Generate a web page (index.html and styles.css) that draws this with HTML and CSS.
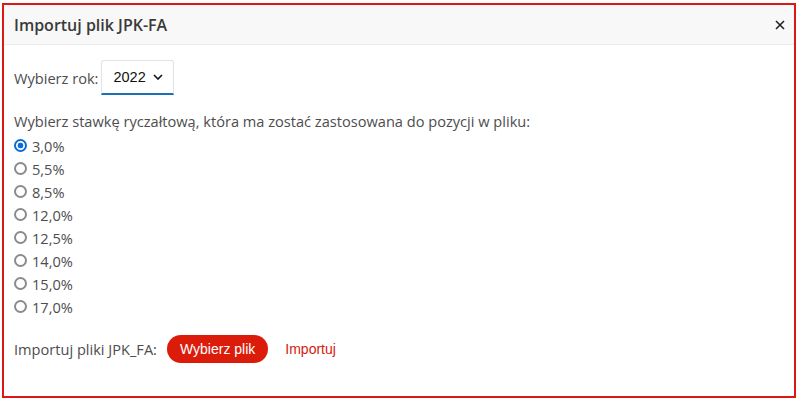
FILE: index.html
```html
<!DOCTYPE html>
<html lang="pl">
<head>
<meta charset="utf-8">
<title>Importuj plik JPK-FA</title>
<link rel="stylesheet" href="styles.css">
</head>
<body>
<div class="dialog">
  <div class="dialog-header">
    <h1 class="dialog-title">Importuj plik JPK-FA</h1>
    <button class="close" aria-label="Zamknij">
      <svg width="10" height="10" viewBox="0 0 10 10"><path d="M1 1L9 9M9 1L1 9" stroke="#222" stroke-width="1.6"/></svg>
    </button>
  </div>
  <div class="dialog-body">
    <div class="year-row">
      <span class="label">Wybierz rok:</span>
      <div class="select">
        <span class="select-value">2022</span>
        <svg width="10" height="6" viewBox="0 0 10 6"><path d="M1 1L5 5L9 1" fill="none" stroke="#111" stroke-width="1.6"/></svg>
      </div>
    </div>
    <p class="rates-label">Wybierz stawkę ryczałtową, która ma zostać zastosowana do pozycji w pliku:</p>
    <div class="rates">
      <label class="radio checked"><span class="dot"></span>3,0%</label>
      <label class="radio"><span class="dot"></span>5,5%</label>
      <label class="radio"><span class="dot"></span>8,5%</label>
      <label class="radio"><span class="dot"></span>12,0%</label>
      <label class="radio"><span class="dot"></span>12,5%</label>
      <label class="radio"><span class="dot"></span>14,0%</label>
      <label class="radio"><span class="dot"></span>15,0%</label>
      <label class="radio"><span class="dot"></span>17,0%</label>
    </div>
    <div class="import-row">
      <span class="label">Importuj pliki JPK_FA:</span>
      <button class="btn-file">Wybierz plik</button>
      <a class="link-import">Importuj</a>
    </div>
  </div>
</div>
</body>
</html>
```

FILE: styles.css
```css
* { box-sizing: border-box; }
html, body { margin: 0; background: #fff; }
body {
  padding: 3px 3px 4px 2px;
  height: 402px;
  font-family: "Open Sans", sans-serif;
  color: #4d4d4d;
}
.dialog {
  border: 2px solid #dd1616;
  height: 100%;
  display: flex;
  flex-direction: column;
}
.dialog-header {
  height: 40px;
  background: #f8f8f8;
  border-bottom: 1px solid #ececec;
  display: flex;
  align-items: center;
  justify-content: space-between;
  padding: 0 8px 0 10px;
}
.dialog-title {
  margin: 0;
  font-family: "Open Sans", sans-serif;
  font-weight: 600;
  font-size: 16px;
  color: #3a3a3a;
}
.close {
  border: 0;
  background: none;
  padding: 0;
  width: 12px;
  height: 12px;
  display: flex;
  align-items: center;
  justify-content: center;
}
.dialog-body {
  padding: 15px 10px 0 10px;
  font-size: 14.6px;
}
.year-row {
  display: flex;
  align-items: center;
  gap: 3px;
}
.select {
  width: 73px;
  height: 35px;
  border: 1px solid #e2e2e2;
  border-bottom: 2px solid #1a6fb5;
  border-radius: 3px 3px 0 0;
  display: flex;
  align-items: center;
  justify-content: space-between;
  padding: 0 10px 0 11px;
  font-family: "Liberation Sans", Arial, sans-serif;
  font-size: 14.5px;
  color: #111;
}
.rates-label {
  margin: 15px 0 0 0;
  line-height: 23px;
}
.rates {
  margin-top: 1px;
  display: flex;
  flex-direction: column;
}
.radio {
  display: flex;
  align-items: center;
  height: 23px;
  gap: 5px;
}
.dot {
  width: 13px;
  height: 13px;
  border: 2px solid #8a8a8f;
  border-radius: 50%;
  background: #fff;
}
.radio.checked .dot {
  border-color: #0b6bd6;
  background: radial-gradient(circle, #0b6bd6 0 2.6px, #fff 3.2px);
}
.import-row {
  margin-top: 17px;
  display: flex;
  align-items: center;
}
.btn-file {
  margin-left: 10px;
  height: 28px;
  padding: 0 13px;
  border: 0;
  border-radius: 14px;
  background: #db1c0b;
  color: #fff;
  font-family: "Liberation Sans", Arial, sans-serif;
  font-size: 14px;
}
.link-import {
  margin-left: 17px;
  color: #d41a0f;
  font-family: "Liberation Sans", Arial, sans-serif;
  font-size: 14px;
}
```
